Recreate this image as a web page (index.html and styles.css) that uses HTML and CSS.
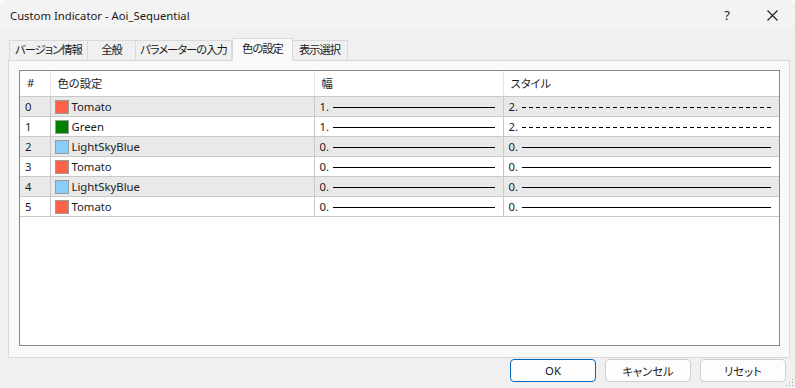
FILE: index.html
```html
<!DOCTYPE html>
<html lang="ja">
  <head>
    <meta charset="UTF-8" />
    <meta name="viewport" content="width=device-width, initial-scale=1.0" />
    <title>Custom Indicator - Aoi_Sequential</title>
    <link rel="stylesheet" href="styles.css">
  </head>
  <body>
    <div class="window">
      <div class="titlebar">
        <span class="title">Custom Indicator - Aoi_Sequential</span>
        <div class="caption">
          <span class="caption-btn help">?</span>
          <span class="caption-btn">
            <svg width="11" height="11" viewBox="0 0 11 11">
              <path d="M0.5 0.5 L10.5 10.5 M10.5 0.5 L0.5 10.5" stroke="#1a1a1a" stroke-width="1.1" fill="none" />
            </svg>
          </span>
        </div>
      </div>

      <div class="tabs">
        <div class="tab tab-about">バージョン情報</div>
        <div class="tab tab-common">全般</div>
        <div class="tab tab-inputs">パラメーターの入力</div>
        <div class="tab tab-colors active">色の設定</div>
        <div class="tab tab-vis">表示選択</div>
      </div>

      <div class="panel">
        <div class="listview">
          <table>
            <colgroup>
              <col class="c-num" />
              <col class="c-color" />
              <col class="c-width" />
              <col class="c-style" />
            </colgroup>
            <thead>
              <tr>
                <th>#</th>
                <th>色の設定</th>
                <th>幅</th>
                <th>スタイル</th>
              </tr>
            </thead>
            <tbody id="rows">
              <!-- rows filled below -->
            </tbody>
          </table>
        </div>
      </div>

      <div class="buttons">
        <button class="btn primary">OK</button>
        <button class="btn">キャンセル</button>
        <button class="btn">リセット</button>
      </div>

      <svg class="grip" width="8" height="8" viewBox="0 0 8 8">
        <rect x="6" y="0" width="1" height="1" fill="#a0a0a0" />
        <rect x="3" y="3" width="1" height="1" fill="#a0a0a0" />
        <rect x="6" y="3" width="1" height="1" fill="#a0a0a0" />
        <rect x="0" y="6" width="1" height="1" fill="#a0a0a0" />
        <rect x="3" y="6" width="1" height="1" fill="#a0a0a0" />
        <rect x="6" y="6" width="1" height="1" fill="#a0a0a0" />
      </svg>
    </div>

    <script>
      const buffers = [
        { color: "Tomato", hex: "#ff6347", width: "1.", style: "2.", dashed: true },
        { color: "Green", hex: "#008000", width: "1.", style: "2.", dashed: true },
        { color: "LightSkyBlue", hex: "#87cefa", width: "0.", style: "0.", dashed: false },
        { color: "Tomato", hex: "#ff6347", width: "0.", style: "0.", dashed: false },
        { color: "LightSkyBlue", hex: "#87cefa", width: "0.", style: "0.", dashed: false },
        { color: "Tomato", hex: "#ff6347", width: "0.", style: "0.", dashed: false },
      ];

      document.getElementById("rows").innerHTML = buffers
        .map(
          (b, i) => `
            <tr class="${i % 2 === 0 ? "shade" : ""}">
              <td class="num">${i}</td>
              <td class="color">
                <span class="swatch" style="background: ${b.hex}"></span>${b.color}
              </td>
              <td class="line-cell">
                <span class="val">${b.width}</span><span class="line"></span>
              </td>
              <td class="line-cell">
                <span class="val">${b.style}</span><span class="line ${b.dashed ? "dashed" : ""}"></span>
              </td>
            </tr>
          `
        )
        .join("");
    </script>
  </body>
</html>
```

FILE: styles.css
```css
html,
body {
  margin: 0;
  padding: 0;
  background: #fbfbfb;
}

body {
  font-family: "Noto Sans", "Noto Sans CJK JP", sans-serif;
  font-size: 11.3px;
  color: #1a1a1a;
  width: 795px;
  height: 388px;
  overflow: hidden;
}

.window {
  position: relative;
  width: 795px;
  height: 388px;
  background: #f0f0f0;
  border-radius: 8px 8px 0 0;
  display: flex;
  flex-direction: column;
  font-feature-settings: "palt";
}

.titlebar {
  height: 30px;
  display: flex;
  align-items: center;
  padding-left: 10px;
  background: #f3f3f3;
  border-radius: 8px 8px 0 0;
}

.title {
  flex: 1;
}

.caption {
  display: flex;
  height: 30px;
}

.caption-btn {
  width: 46px;
  display: flex;
  align-items: center;
  justify-content: center;
}

.help {
  font-size: 13px;
  margin-right: -1px;
}

.tabs {
  display: flex;
  align-items: flex-end;
  height: 22px;
  margin-top: 8px;
  padding-left: 9px;
}

.tab {
  box-sizing: border-box;
  height: 20px;
  line-height: 18px;
  text-align: center;
  letter-spacing: -1px;
  background: #f0f0f0;
  border: 1px solid #d9d9d9;
  border-bottom: none;
  border-left: none;
  white-space: nowrap;
}

.tab-about {
  width: 79px;
  border-left: 1px solid #d9d9d9;
}

.tab-common {
  width: 48px;
}

.tab-inputs {
  width: 96px;
}

.tab-colors {
  width: 61px;
}

.tab-vis {
  width: 56px;
}

.tab.active {
  position: relative;
  z-index: 1;
  height: 23px;
  line-height: 20px;
  margin-bottom: -1px;
  background: #f9f9f9;
  border: 1px solid #d9d9d9;
  border-bottom: none;
  margin-right: -1px;
}

.panel {
  box-sizing: border-box;
  width: 782px;
  height: 298px;
  margin-left: 8px;
  padding: 9px 9px 11px 10px;
  background: #f9f9f9;
  border: 1px solid #d9d9d9;
}

.listview {
  box-sizing: border-box;
  height: 276px;
  background: #ffffff;
  border: 1px solid #828790;
}

table {
  width: 759px;
  border-collapse: collapse;
  table-layout: fixed;
}

.c-num {
  width: 30px;
}

.c-color {
  width: 264px;
}

.c-width {
  width: 189px;
}

.c-style {
  width: 276px;
}

th {
  box-sizing: border-box;
  height: 25px;
  padding: 0 0 1px 7px;
  font-weight: normal;
  text-align: left;
  border-right: 1px solid #e5e5e5;
  border-bottom: 1px solid #c8c8c8;
}

th:last-child {
  border-right: none;
}

td {
  box-sizing: border-box;
  height: 20px;
  padding: 0;
  border-right: 1px solid #c8c8c8;
  border-bottom: 1px solid #c8c8c8;
  white-space: nowrap;
}

td:last-child {
  border-right: none;
}

tr.shade td {
  background: #e9e9e9;
}

.num {
  padding-left: 5px;
}

.color {
  padding-left: 4px;
}

.swatch {
  display: inline-block;
  box-sizing: border-box;
  width: 14px;
  height: 14px;
  border: 1px solid #9a9a9a;
  margin-right: 3px;
  vertical-align: -3px;
}

.line-cell {
  padding: 0 8px 0 5px;
  vertical-align: middle;
}

.line-cell .val {
  display: inline-block;
  width: 13px;
}

.line {
  display: inline-block;
  width: calc(100% - 13px);
  height: 1px;
  background: #000;
  vertical-align: 3px;
}

.line.dashed {
  background: repeating-linear-gradient(90deg, #000 0 4px, transparent 4px 7px);
}

.buttons {
  display: flex;
  justify-content: flex-end;
  gap: 9px;
  margin-top: 1px;
  padding-right: 9px;
}

.btn {
  box-sizing: border-box;
  width: 86px;
  height: 23px;
  font-family: inherit;
  font-size: 11.3px;
  font-feature-settings: "palt";
  color: #1a1a1a;
  background: #fdfdfd;
  border: 1px solid #d0d0d0;
  border-radius: 4px;
  padding: 0;
}

.btn.primary {
  border-color: #0067c0;
}

.grip {
  position: absolute;
  right: 1px;
  bottom: 1px;
}
```
